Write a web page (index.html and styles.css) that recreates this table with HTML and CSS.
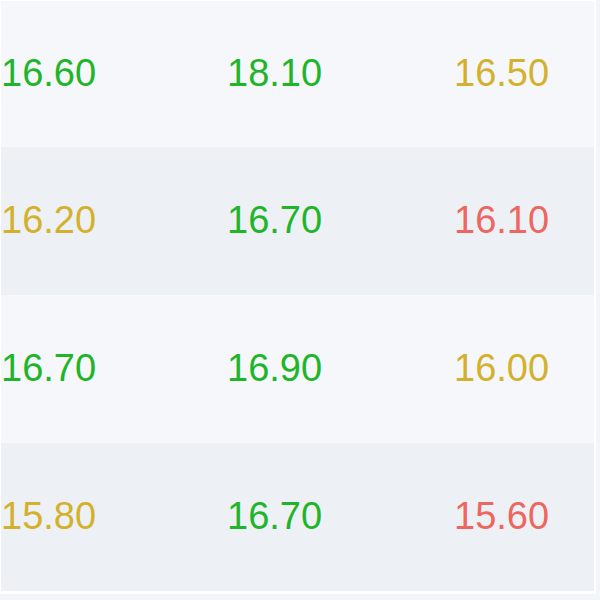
FILE: index.html
```html
<!DOCTYPE html>
<html lang="en">
<head>
    <meta charset="UTF-8">
    <title>Scores</title>
    <link rel="stylesheet" href="styles.css">
</head>
<body>
    <div class="table">
        <div class="row">
            <span class="cell good">16.60</span>
            <span class="cell good">18.10</span>
            <span class="cell mid">16.50</span>
        </div>
        <div class="row">
            <span class="cell mid">16.20</span>
            <span class="cell good">16.70</span>
            <span class="cell bad">16.10</span>
        </div>
        <div class="row">
            <span class="cell good">16.70</span>
            <span class="cell good">16.90</span>
            <span class="cell mid">16.00</span>
        </div>
        <div class="row">
            <span class="cell mid">15.80</span>
            <span class="cell good">16.70</span>
            <span class="cell bad">15.60</span>
        </div>
    </div>
</body>
</html>
```

FILE: styles.css
```css
body {
    margin: 0;
    background-color: #f3f6f9;
    font-family: 'Liberation Sans', Arial, sans-serif;
}

.table {
    width: 593px;
    border-top: 1px solid #FFFFFF;
    border-left: 1px solid #FFFFFF;
    border-right: 2px solid #FFFFFF;
    border-bottom: 3px solid #FFFFFF;
}

.row {
    display: grid;
    grid-template-columns: 226px 227px 1fr;
    align-items: center;
    height: 148px;
    padding-bottom: 3px;
    box-sizing: border-box;
    background-color: #f5f7fa;
}

.row:first-child {
    height: 146px;
}

.row:nth-child(even) {
    background-color: #edf1f5;
}

.cell {
    font-size: 38px;
    line-height: 1;
}

.good {
    color: #1fb52a;
}

.mid {
    color: #d4b12c;
}

.bad {
    color: #ee6660;
}
```
